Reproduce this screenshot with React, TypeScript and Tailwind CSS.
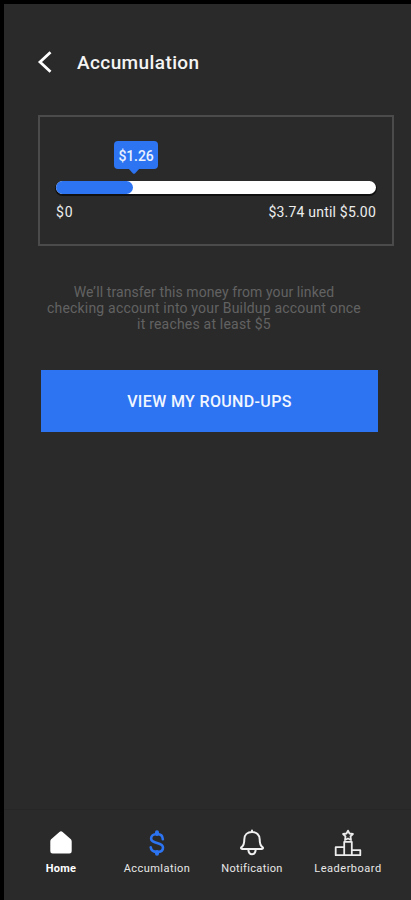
import React from "react"

const IconHome = () => (
  <svg width="24" height="24" viewBox="0 0 24 24" fill="#ffffff">
    <path d="M10.400 1a2.400 2.400 0 0 1 3.200 0l7.700 6.700c.9.800 1.400 1.700 1.400 2.800v9.700a2.300 2.300 0 0 1-2.300 2.300H3.600a2.300 2.300 0 0 1-2.300-2.300v-9.700c0-1.100.5-2 1.400-2.800z" />
  </svg>
)

const IconDollar = () => (
  <svg width="16" height="28" viewBox="0 0 16 28" fill="none" stroke="#2d74f2" strokeWidth="2.6" strokeLinecap="round" strokeLinejoin="round">
    <path d="M13.800 10.200C13.700 7.200 11.600 5 8 5 4.400 5 2.100 7 2.100 9.600c0 2.600 1.900 3.600 5.900 4.500s6 2 6 4.600c0 2.600-2.400 4.300-6 4.300-3.600 0-6.100-2-6.300-4.800" />
    <path d="M8 3.200V5M8 23v1.700" strokeWidth="4" />
  </svg>
)

const IconBell = () => (
  <svg width="26" height="28" viewBox="0 0 26 28" fill="none" stroke="#f0f0f0" strokeWidth="2" strokeLinecap="round" strokeLinejoin="round">
    <path d="M13 1.400v1.400M13 3c-4.500 0-7.700 3-7.700 7.400 0 4.700-.5 6-2.700 7.700-1 .8-.7 1.900.5 1.900h19.800c1.200 0 1.500-1.100.5-1.900-2.200-1.700-2.700-3-2.700-7.700C20.700 6 17.500 3 13 3z" />
    <path d="M9.300 20.400c.2 3 1.600 4.800 3.700 4.800s3.500-1.800 3.700-4.800" />
  </svg>
)

const IconPodium = () => (
  <svg width="28" height="28" viewBox="0 0 28 28" fill="none" stroke="#ececec" strokeWidth="1.800" strokeLinejoin="round">
    <path d="m14 1.600 1.500 2.900 3.400.5-2.400 2.400.5 3.600-3-1.500-3 1.500.5-3.600L9.100 5l3.400-.5z" />
    <path d="M10.200 26.200V12.800h7.600v13.400M10.200 18.200H1.700v8h24.600v-5h-8.500" />
  </svg>
)

const tabs = [
  { label: "Home", icon: IconHome, width: "w-[96px]", text: "font-bold text-white tracking-[0.3px]" },
  { label: "Accumlation", icon: IconDollar, width: "w-[96px]", text: "text-[#e8e8e8] tracking-[0.45px]" },
  { label: "Notification", icon: IconBell, width: "w-[94px]", text: "text-[#e8e8e8] tracking-[0.35px]" },
  { label: "Leaderboard", icon: IconPodium, width: "w-[98px]", text: "text-[#e8e8e8] tracking-[0.5px]" },
]

const current = 1.26
const goal = 5

const Progress: React.FC = () => {
  const percent = (current / goal) * 95

  return (
    <section className="ml-[34px] mt-[41px] h-[131px] w-[356px] shrink-0 border-2 border-[#4b4b4b] px-[16px] pt-[64px]">
      <div className="relative h-[13px] w-[320px] rounded-full bg-white shadow-[0_1px_0_1px_#101010]">
        <div className="h-full rounded-full bg-[#2d74f2]" style={{ width: `${percent}%` }} />
        <div className="absolute -top-[40px] left-[58px] flex h-[28px] w-[44px] items-center justify-center rounded-[4px] bg-[#2d74f2] text-[14px] font-medium text-[#eaf1ff]">
          <span className="mt-[2px] tracking-[-0.1px]">$1.26</span>
          <svg className="absolute left-[14px] top-[27px]" width="12" height="7" viewBox="0 0 12 7" fill="#2d74f2">
            <path d="M0 0h12L7.200 5.200q-1.200 1.200-2.400 0z" />
          </svg>
        </div>
      </div>
      <div className="mt-[8px] flex w-[320px] justify-between text-[14px] leading-[20px] text-[#ededed]">
        <span className="tracking-[0.8px]">$0</span>
        <span className="tracking-[0.2px]">$3.74 until $5.00</span>
      </div>
    </section>
  )
}

export default function App() {
  return (
    <div className="flex h-[900px] w-[411px] flex-col overflow-hidden border-l-4 border-t-4 border-black bg-[#2a2a2a] font-[Roboto,sans-serif]">
      <header className="mt-[46px] flex h-[24px] shrink-0 items-center pl-[33px]">
        <svg width="16" height="24" viewBox="0 0 16 24" fill="none" stroke="#ffffff" strokeWidth="2.8">
          <path d="M13.500 2.200 3 12l10.500 9.800" />
        </svg>
        <h1 className="ml-[24px] text-[19px] mt-[1px] font-medium leading-[24px] tracking-[0.4px] text-[#f4f4f4]">Accumulation</h1>
      </header>

      <Progress />

      <p className="ml-[34px] mt-[38px] w-[332px] shrink-0 whitespace-nowrap text-center text-[14px] leading-[16px] text-[#626262]">
        <span className="tracking-[0.09px]">We’ll transfer this money from your linked</span>
        <br />
        <span className="tracking-[0.19px]">checking account into your Buildup account once</span>
        <br />
        <span className="tracking-[0.2px]">it reaches at least $5</span>
      </p>

      <button className="ml-[37px] mt-[38px] h-[62px] w-[337px] shrink-0 bg-[#2d74f2] pt-[1px] text-[16px] font-medium tracking-[0.35px] text-[#f1f6ff]">
        VIEW MY ROUND-UPS
      </button>

      <nav className="mt-auto flex h-[91px] shrink-0 border-t border-[#262626] pl-[9px] pt-[18px]">
        {tabs.map(({ label, icon: Icon, width, text }) => (
          <a key={label} className={`flex flex-col items-center ${width}`}>
            <span className="flex h-[30px] items-center">
              <Icon />
            </span>
            <span className={`mt-[4px] text-[11px] leading-[14px] ${text}`}>{label}</span>
          </a>
        ))}
      </nav>
    </div>
  )
}
